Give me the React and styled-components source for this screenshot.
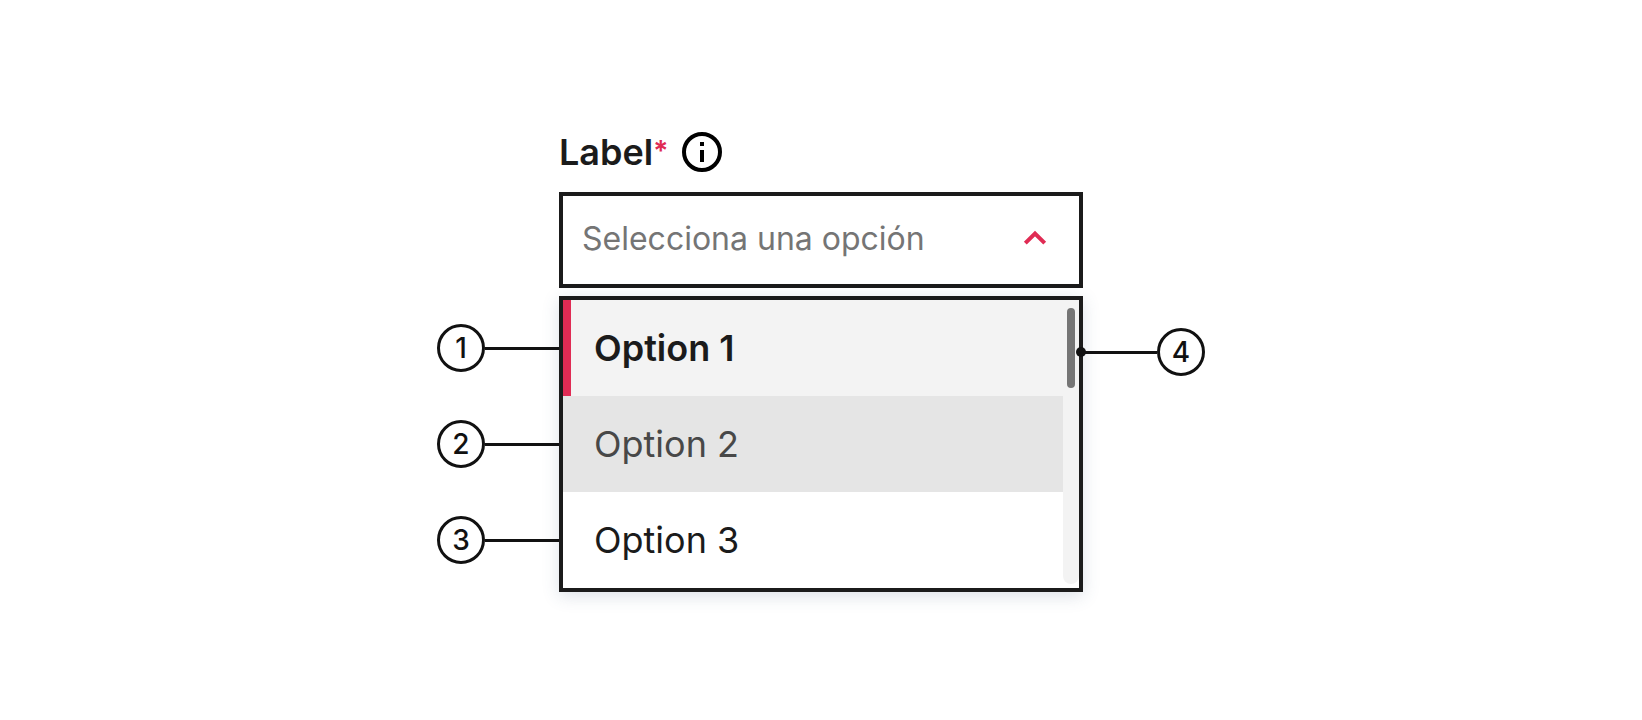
import React, { useState } from "react";
import styled, { createGlobalStyle, ThemeProvider } from "styled-components";

const theme = {
  colors: {
    black: "#1b1b1b",
    line: "#111111",
    red: "#e02b54",
    white: "#ffffff",
    fontGrey: "#757575",
    darkGrey: "#484848",
    hoverGrey: "#e5e5e5",
    lightGrey: "#f3f3f3",
  },
  fontSizes: {
    title: "36px",
    field: "32px",
    small: "28px",
  },
};

const options = [
  { title: "Option 1", state: "selected" },
  { title: "Option 2", state: "hover" },
  { title: "Option 3", state: "default" },
];

const App = () => {
  const [value, setValue] = useState("");

  return (
    <ThemeProvider theme={theme}>
      <GlobalStyle />
      <Page>
        <Anatomy>
          <FieldBox>
            <LabelBox>
              <Label htmlFor="option-field">
                Label<Required>*</Required>
              </Label>
              <InfoButton type="button" aria-label="Info">
                <InfoIcon />
              </InfoButton>
            </LabelBox>
            <SelectBox>
              <Select
                id="option-field"
                required
                value={value}
                onChange={e => setValue(e.target.value)}
              >
                <option value="">Selecciona una opción</option>
                {options.map(el => (
                  <option key={el.title}>{el.title}</option>
                ))}
              </Select>
              <ChevronIcon />
            </SelectBox>
          </FieldBox>

          <LeftCallouts>
            {options.map((el, index) => (
              <Callout key={el.title}>
                <CalloutNumber>{index + 1}</CalloutNumber>
                <CalloutLine />
              </Callout>
            ))}
          </LeftCallouts>

          <Menu>
            <OptionList role="listbox" aria-label="Label">
              {options.map(el => (
                <Option
                  key={el.title}
                  role="option"
                  aria-selected={el.state === "selected"}
                  $state={el.state}
                  onClick={() => setValue(el.title)}
                >
                  {el.title}
                </Option>
              ))}
            </OptionList>
            <ScrollTrack>
              <ScrollThumb />
            </ScrollTrack>
          </Menu>

          <RightCallouts>
            <Callout>
              <CalloutLine $dot />
              <CalloutNumber>4</CalloutNumber>
            </Callout>
          </RightCallouts>
        </Anatomy>
      </Page>
    </ThemeProvider>
  );
};

export default App;

const InfoIcon = () => (
  <svg width="40" height="40" viewBox="0 0 40 40" fill="none" aria-hidden="true">
    <circle cx="20" cy="20" r="18" stroke="#000" strokeWidth="4" />
    <path d="M18 10h4v4h-4zM18 18h4v12h-4z" fill="#000" />
  </svg>
);

const ChevronIcon = () => (
  <Chevron width="24" height="16" viewBox="0 0 24 16" fill="none" aria-hidden="true">
    <path d="M2.3 13.2 12 3.5l9.7 9.7" stroke="currentColor" strokeWidth="4" />
  </Chevron>
);

const GlobalStyle = createGlobalStyle`
  * {
    box-sizing: border-box;
  }

  body {
    margin: 0;
    background-color: ${theme.colors.white};
    color: ${theme.colors.black};
    font-family: Inter, "Liberation Sans", sans-serif;
  }
`;

const Page = styled.main`
  display: flex;
  justify-content: center;
  padding: 132px 16px;
  min-height: 100vh;
`;

const Anatomy = styled.div`
  display: grid;
  grid-template-columns: 122px minmax(0, 524px) 122px;
  align-content: start;
  justify-content: center;
  row-gap: 8px;
  width: 100%;
`;

const FieldBox = styled.div`
  grid-column: 2;
`;

const LabelBox = styled.div`
  display: flex;
  align-items: center;
  gap: 14px;
  margin-bottom: 20px;
  height: 40px;
`;

const Label = styled.label`
  font-size: ${({ theme }) => theme.fontSizes.title};
  font-weight: 600;
  line-height: 40px;
`;

const Required = styled.span`
  color: ${({ theme }) => theme.colors.red};
  font-size: ${({ theme }) => theme.fontSizes.small};
  line-height: 1;
  vertical-align: 4px;
`;

const InfoButton = styled.button`
  display: flex;
  padding: 0;
  border: none;
  background: none;
  cursor: pointer;
`;

const SelectBox = styled.div`
  display: grid;
  grid-template-columns: minmax(0, 1fr) 68px;
  align-items: center;
`;

const Select = styled.select`
  grid-area: 1 / 1 / 2 / 3;
  padding: 0 68px 4px 19px;
  width: 100%;
  height: 96px;
  appearance: none;
  background-color: ${({ theme }) => theme.colors.white};
  border: 4px solid ${({ theme }) => theme.colors.black};
  border-radius: 0;
  color: ${({ theme }) => theme.colors.fontGrey};
  font-family: inherit;
  font-size: ${({ theme }) => theme.fontSizes.field};
`;

const Chevron = styled.svg`
  grid-area: 1 / 2;
  z-index: 1;
  margin: 0 0 4px 8px;
  color: ${({ theme }) => theme.colors.red};
  pointer-events: none;
`;

const Menu = styled.div`
  display: flex;
  border: 4px solid ${({ theme }) => theme.colors.black};
  background-color: ${({ theme }) => theme.colors.white};
  box-shadow: 0 4px 16px rgba(60, 90, 120, 0.18);
`;

const OptionList = styled.ul`
  flex: 1;
  margin: 0;
  padding: 0;
  list-style: none;
`;

const optionStyles = {
  selected: { background: "lightGrey", color: "black", bar: "red", weight: 600 },
  hover: { background: "hoverGrey", color: "darkGrey", bar: "hoverGrey", weight: 400 },
  default: { background: "white", color: "black", bar: "white", weight: 400 },
};

const Option = styled.li`
  display: flex;
  align-items: center;
  padding-left: 23px;
  height: 96px;
  background-color: ${({ theme, $state }) => theme.colors[optionStyles[$state].background]};
  border-left: 8px solid ${({ theme, $state }) => theme.colors[optionStyles[$state].bar]};
  color: ${({ theme, $state }) => theme.colors[optionStyles[$state].color]};
  font-size: ${({ theme }) => theme.fontSizes.title};
  font-weight: ${({ $state }) => optionStyles[$state].weight};
  cursor: pointer;
`;

const ScrollTrack = styled.div`
  margin-bottom: 4px;
  padding: 8px 4px;
  width: 16px;
  background-color: ${({ theme }) => theme.colors.lightGrey};
  border-radius: 0 0 8px 8px;
`;

const ScrollThumb = styled.div`
  height: 80px;
  background-color: ${({ theme }) => theme.colors.fontGrey};
  border-radius: 4px;
`;

const LeftCallouts = styled.div`
  display: grid;
  grid-column: 1;
  grid-auto-rows: 96px;
  align-items: center;
  padding-top: 4px;
`;

const RightCallouts = styled.div`
  padding-top: 32px;
`;

const Callout = styled.div`
  display: flex;
  align-items: center;
`;

const CalloutNumber = styled.span`
  display: flex;
  align-items: center;
  justify-content: center;
  width: 48px;
  height: 48px;
  border: 3px solid ${({ theme }) => theme.colors.line};
  border-radius: 50%;
  color: ${({ theme }) => theme.colors.line};
  font-size: ${({ theme }) => theme.fontSizes.small};
  font-weight: 500;
`;

const CalloutLine = styled.span`
  position: relative;
  flex: 1;
  height: 3px;
  background-color: ${({ theme }) => theme.colors.line};

  /* end point that sits on the menu border */
  &::before {
    content: "";
    display: ${({ $dot }) => ($dot ? "block" : "none")};
    position: absolute;
    top: -4px;
    left: -7px;
    width: 10px;
    height: 10px;
    background-color: ${({ theme }) => theme.colors.line};
    border-radius: 50%;
  }
`;
